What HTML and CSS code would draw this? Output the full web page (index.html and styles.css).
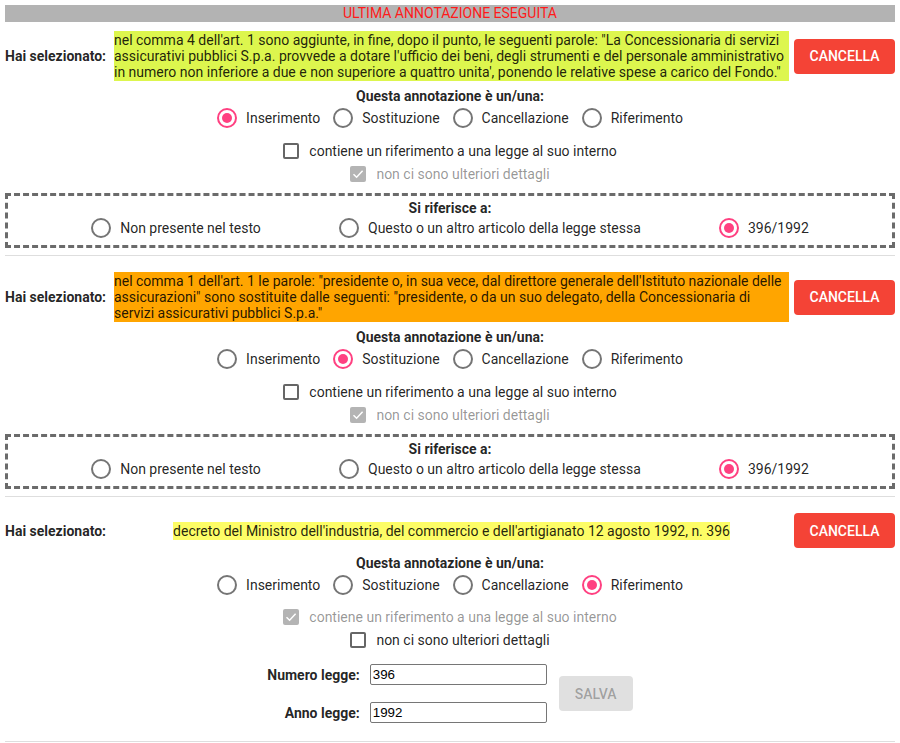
FILE: index.html
```html
<!DOCTYPE html>
<html lang="it">
<head>
<meta charset="utf-8">
<title>Annotazioni</title>
<link rel="stylesheet" href="styles.css">
</head>
<body>
<div class="banner">ULTIMA ANNOTAZIONE ESEGUITA</div>

<section class="annot annot-first">
  <div class="sel-row">
    <div class="sel-label">Hai selezionato:</div>
    <div class="sel-cell"><span class="hl hl-green">nel comma 4 dell'art. 1 sono aggiunte, in fine, dopo il punto, le seguenti parole: "La Concessionaria di servizi assicurativi pubblici S.p.a. provvede a dotare l'ufficio dei beni, degli strumenti e del personale amministrativo in numero non inferiore a due e non superiore a quattro unita', ponendo le relative spese a carico del Fondo."</span></div>
    <button class="btn btn-red">Cancella</button>
  </div>
  <div class="question">Questa annotazione è un/una:</div>
  <div class="radio-row">
    <label class="opt"><span class="radio on"></span>Inserimento</label>
    <label class="opt"><span class="radio"></span>Sostituzione</label>
    <label class="opt"><span class="radio"></span>Cancellazione</label>
    <label class="opt"><span class="radio"></span>Riferimento</label>
  </div>
  <div class="checks">
    <label class="check-row"><span class="cb"></span>contiene un riferimento a una legge al suo interno</label>
    <label class="check-row disabled"><span class="cb cb-checked"><svg viewBox="0 0 16 16" width="16" height="16"><path d="M3.5 8.2 L6.6 11.2 L12.6 4.8" fill="none" stroke="#fff" stroke-width="1.5"/></svg></span>non ci sono ulteriori dettagli</label>
  </div>
  <div class="refbox">
    <div class="question q-tight">Si riferisce a:</div>
    <div class="radio-row spread">
      <label class="opt"><span class="radio"></span>Non presente nel testo</label>
      <label class="opt"><span class="radio"></span>Questo o un altro articolo della legge stessa</label>
      <label class="opt"><span class="radio on"></span>396/1992</label>
    </div>
  </div>
</section>

<section class="annot">
  <div class="sel-row">
    <div class="sel-label">Hai selezionato:</div>
    <div class="sel-cell"><span class="hl hl-orange">nel comma 1 dell'art. 1 le parole: "presidente o, in sua vece, dal direttore generale dell'Istituto nazionale delle assicurazioni" sono sostituite dalle seguenti: "presidente, o da un suo delegato, della Concessionaria di servizi assicurativi pubblici S.p.a."</span></div>
    <button class="btn btn-red">Cancella</button>
  </div>
  <div class="question">Questa annotazione è un/una:</div>
  <div class="radio-row">
    <label class="opt"><span class="radio"></span>Inserimento</label>
    <label class="opt"><span class="radio on"></span>Sostituzione</label>
    <label class="opt"><span class="radio"></span>Cancellazione</label>
    <label class="opt"><span class="radio"></span>Riferimento</label>
  </div>
  <div class="checks">
    <label class="check-row"><span class="cb"></span>contiene un riferimento a una legge al suo interno</label>
    <label class="check-row disabled"><span class="cb cb-checked"><svg viewBox="0 0 16 16" width="16" height="16"><path d="M3.5 8.2 L6.6 11.2 L12.6 4.8" fill="none" stroke="#fff" stroke-width="1.5"/></svg></span>non ci sono ulteriori dettagli</label>
  </div>
  <div class="refbox">
    <div class="question q-tight">Si riferisce a:</div>
    <div class="radio-row spread">
      <label class="opt"><span class="radio"></span>Non presente nel testo</label>
      <label class="opt"><span class="radio"></span>Questo o un altro articolo della legge stessa</label>
      <label class="opt"><span class="radio on"></span>396/1992</label>
    </div>
  </div>
</section>

<section class="annot annot-last">
  <div class="sel-row">
    <div class="sel-label">Hai selezionato:</div>
    <div class="sel-cell"><span class="hl hl-yellow">decreto del Ministro dell'industria, del commercio e dell'artigianato 12 agosto 1992, n. 396</span></div>
    <button class="btn btn-red">Cancella</button>
  </div>
  <div class="question">Questa annotazione è un/una:</div>
  <div class="radio-row">
    <label class="opt"><span class="radio"></span>Inserimento</label>
    <label class="opt"><span class="radio"></span>Sostituzione</label>
    <label class="opt"><span class="radio"></span>Cancellazione</label>
    <label class="opt"><span class="radio on"></span>Riferimento</label>
  </div>
  <div class="checks checks-tight">
    <label class="check-row disabled"><span class="cb cb-checked"><svg viewBox="0 0 16 16" width="16" height="16"><path d="M3.5 8.2 L6.6 11.2 L12.6 4.8" fill="none" stroke="#fff" stroke-width="1.5"/></svg></span>contiene un riferimento a una legge al suo interno</label>
    <label class="check-row"><span class="cb"></span>non ci sono ulteriori dettagli</label>
  </div>
  <div class="law-form">
    <div class="law-fields">
      <label class="law-label" for="num">Numero legge:</label>
      <input class="law-input" id="num" type="text" value="396">
      <label class="law-label" for="anno">Anno legge:</label>
      <input class="law-input" id="anno" type="text" value="1992">
    </div>
    <button class="btn btn-disabled" disabled>Salva</button>
  </div>
</section>
</body>
</html>
```

FILE: styles.css
```css
html, body {
  margin: 0;
  overflow: hidden;
}
body {
  padding: 5px 5px 0;
  font-family: Roboto, "Liberation Sans", Arial, sans-serif;
  font-size: 14px;
  color: rgba(0, 0, 0, 0.87);
}
.banner {
  background: #b3b3b3;
  color: #ff1a1a;
  text-align: center;
  height: 17px;
  line-height: 17px;
  font-size: 14px;
}
.annot {
  padding: 16px 0 7px;
  border-bottom: 1px solid #dedede;
}
.annot-first {
  padding-top: 9px;
}
.annot-last {
  padding-bottom: 18px;
}
.sel-row {
  display: grid;
  grid-template-columns: 104px 1fr 101px;
  column-gap: 5px;
  align-items: center;
}
.sel-label {
  font-weight: 700;
}
.sel-cell {
  text-align: center;
}
.hl {
  display: inline-block;
  text-align: left;
  padding: 1px 0;
}
.hl-green { background: #ddf64e; }
.hl-orange { background: #ffa500; }
.hl-yellow { background: #fdfd66; }
.btn {
  height: 35px;
  border: none;
  border-radius: 4px;
  font-family: Roboto, "Liberation Sans", Arial, sans-serif;
  font-size: 14px;
  font-weight: 500;
  text-transform: uppercase;
  padding: 0;
}
.btn-red {
  width: 101px;
  background: #f44336;
  color: #fff;
}
.btn-disabled {
  width: 74px;
  background: #e0e0e0;
  color: rgba(0, 0, 0, 0.3);
}
.question {
  text-align: center;
  font-weight: 700;
  line-height: 16px;
  margin-top: 7px;
}
.q-tight {
  margin-top: 0;
}
.radio-row {
  display: flex;
  justify-content: center;
  align-items: center;
  gap: 13px;
  margin-top: 4px;
  height: 20px;
}
.refbox .radio-row {
  margin-top: 2px;
}
.spread {
  justify-content: space-evenly;
  gap: 0;
  padding: 0 5px;
}
.opt {
  display: flex;
  align-items: center;
  gap: 9px;
}
.radio {
  width: 20px;
  height: 20px;
  box-sizing: border-box;
  border: 2px solid #757575;
  border-radius: 50%;
  position: relative;
  flex: none;
}
.radio.on {
  border-color: #ff4081;
}
.radio.on::after {
  content: "";
  position: absolute;
  left: 3px;
  top: 3px;
  width: 10px;
  height: 10px;
  border-radius: 50%;
  background: #ff4081;
}
.checks {
  margin-top: 11px;
}
.checks-tight {
  margin-top: 10px;
}
.check-row {
  display: flex;
  justify-content: center;
  align-items: center;
  gap: 10px;
  height: 23px;
}
.check-row.disabled {
  color: rgba(0, 0, 0, 0.42);
}
.cb {
  width: 16px;
  height: 16px;
  box-sizing: border-box;
  border: 2px solid #666;
  border-radius: 2px;
  flex: none;
  display: flex;
}
.cb-checked {
  border: none;
  background: #b4b4b4;
}
.refbox {
  margin-top: 8px;
  border: 3px dashed #6b6b6b;
  padding: 4px 0 7px;
}
.law-form {
  display: flex;
  justify-content: center;
  align-items: center;
  gap: 12px;
  margin-top: 13px;
}
.law-fields {
  display: grid;
  grid-template-columns: auto 177px;
  column-gap: 10px;
  row-gap: 17px;
  align-items: center;
}
.law-label {
  font-weight: 700;
  text-align: right;
}
.law-input {
  height: 21px;
  box-sizing: border-box;
  border: 1px solid #767676;
  border-radius: 2px;
  padding: 1px 2px;
  margin: 0;
  font-family: "Liberation Sans", Arial, sans-serif;
  font-size: 13.33px;
  color: #000;
  background: #fff;
}
```
